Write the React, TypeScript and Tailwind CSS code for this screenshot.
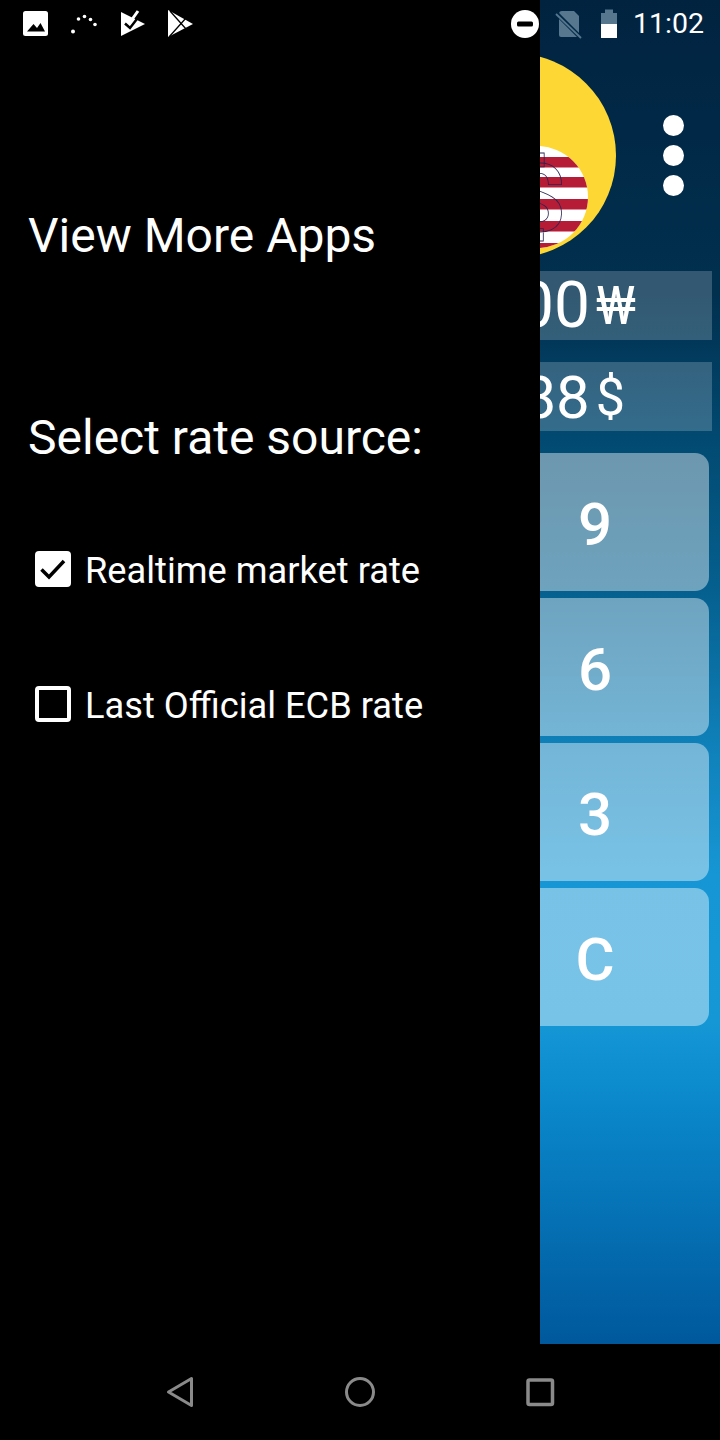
import React from "react";

const roboto = "font-['Roboto',sans-serif]";

function StatusBar() {
  return (
    <div className="absolute top-0 left-0 w-[720px] h-[48px] flex items-center justify-between">
      <svg width="200" height="48" viewBox="0 0 200 48" className="block">
        <rect x="23" y="11" width="25" height="25" rx="2.500" fill="#fff" />
        <path d="M27 31.500 L33.500 24 L37 28 L40.500 23 L45 31.500 Z" fill="#000" />
        <g fill="#fff">
          <circle cx="73" cy="31.500" r="2" />
          <circle cx="78.500" cy="19" r="1.800" />
          <circle cx="84.500" cy="16.500" r="1.800" />
          <circle cx="90.500" cy="19.500" r="1.800" />
          <circle cx="95" cy="24.500" r="1.800" />
        </g>
        <path d="M121 12 L145 24 L121 36 Z" fill="#fff" />
        <path d="M125 23.500 L130 28 L140 15" fill="none" stroke="#000" strokeWidth="2.500" />
        <path d="M128.500 19.500 L130.500 21.500 L138 11" fill="none" stroke="#fff" strokeWidth="3" />
        <path d="M168 10 L193 24 L168 37 Z" fill="#fff" />
        <path d="M169 37 L186 18 M170 11 L186 29" stroke="#000" strokeWidth="1.300" fill="none" />
      </svg>
      <div className="flex items-center h-[48px]">
        <svg width="123" height="48" viewBox="510 0 123 48" className="block">
          <circle cx="525" cy="24" r="14" fill="#fff" />
          <rect x="517" y="21.500" width="16" height="5" rx="1.500" fill="#000" />
          <path d="M562 11 H574 L579 16 V35 A2 2 0 0 1 577 37 H561 A2 2 0 0 1 559 35 V14 A3 3 0 0 1 562 11 Z" fill="#56778e" />
          <path d="M556 13 L582 39" stroke="#012844" strokeWidth="4.500" />
          <path d="M556 14 L581 38" stroke="#56778e" strokeWidth="1.800" />
          <path d="M605 13 V9.500 H613 V13 H617 V38 H601 V13 Z" fill="#56778e" />
          <rect x="601" y="24" width="16" height="14" fill="#fff" />
        </svg>
        <span className={`${roboto} text-white text-[28.500px] leading-[48px] mr-[16px] w-[71px] whitespace-nowrap`}>11:02</span>
      </div>
    </div>
  );
}

function Drawer() {
  return (
    <div className={`w-[540px] h-full bg-black text-white ${roboto} shrink-0`}>
      <div className="pl-[28px] pt-[206px] text-[48px] leading-[60px]">View More Apps</div>
      <div className="pl-[28px] pt-[142px] text-[48px] leading-[60px]">Select rate source:</div>
      <div className="pl-[35px] pt-[83px] flex items-center gap-[14px] h-[119px] text-[36.250px]">
        <div className="w-[36px] h-[36px] bg-white rounded-[4px] flex items-center justify-center">
          <svg width="28" height="24" viewBox="0 0 28 24">
            <path d="M2.500 12.500 L10 20 L25 4" fill="none" stroke="#000" strokeWidth="3.500" />
          </svg>
        </div>
        <span className="pt-[4px]">Realtime market rate</span>
      </div>
      <div className="pl-[35px] pt-[99px] flex items-center gap-[14px] h-[135px] text-[36.250px]">
        <div className="w-[36px] h-[36px] border-[4px] border-white rounded-[4px]" />
        <span className="pt-[4px]">Last Official ECB rate</span>
      </div>
    </div>
  );
}

function Coin() {
  const stripes = [157, 177, 199, 221, 243];
  return (
    <svg width="80" height="210" viewBox="540 50 80 210" className="block shrink-0 mt-[50px]">
      <defs>
        <clipPath id="flag">
          <circle cx="537" cy="197" r="51" />
        </clipPath>
      </defs>
      <circle cx="514" cy="155.500" r="102" fill="#fdd835" />
      <g clipPath="url(#flag)">
        <rect x="480" y="140" width="120" height="120" fill="#fff" />
        {stripes.map((y) => (
          <rect key={y} x="480" y={y} width="120" height="10.500" fill="#b71c36" />
        ))}
      </g>
      <text
        x="539"
        y="231"
        textAnchor="middle"
        fontFamily="Roboto, sans-serif"
        fontWeight="700"
        fontSize="94"
        fill="none"
        stroke="#2b2350"
        strokeWidth="0.800"
      >
        $
      </text>
    </svg>
  );
}

function Amount({
  digits,
  unit,
  digitSize,
  unitSize,
  right,
  mt,
}: {
  digits: string;
  unit: string;
  digitSize: string;
  unitSize: string;
  right: string;
  mt: string;
}) {
  return (
    <div className={`${mt} h-[69px] w-[172px] bg-white/20 flex items-center justify-end overflow-hidden shrink-0`}>
      <div className={`${roboto} ${right} text-white flex items-center gap-[6px] whitespace-nowrap`}>
        <span className={`${digitSize} leading-[69px]`}>{digits}</span>
        <span className={`${unitSize} leading-[69px]`}>{unit}</span>
      </div>
    </div>
  );
}

function Key({ label }: { label: string }) {
  return (
    <div className="w-[228px] h-[138px] shrink-0 rounded-[14px] bg-white/42 flex items-center justify-center pt-[6px]">
      <span className={`${roboto} text-white font-medium text-[60px]`}>{label}</span>
    </div>
  );
}

function Panel() {
  return (
    <div className="w-[180px] h-full overflow-hidden flex flex-col bg-[linear-gradient(180deg,#012340_0%,#01304f_22%,#024a72_33%,#05608f_44%,#0f7fb8_55%,#1696d4_65%,#1597d6_76%,#0a88cb_82%,#00589c_100%)]">
      <div className="h-[271px] flex justify-between shrink-0">
        <Coin />
        <div className="flex flex-col gap-[9px] mt-[115px] mr-[36px]">
          <div className="w-[21px] h-[21px] rounded-full bg-white" />
          <div className="w-[21px] h-[21px] rounded-full bg-white" />
          <div className="w-[21px] h-[21px] rounded-full bg-white" />
        </div>
      </div>
      <Amount digits="000" unit="₩" digitSize="text-[64px]" unitSize="text-[54px]" right="mr-[76px]" mt="mt-0" />
      <Amount digits="888" unit="$" digitSize="text-[60px]" unitSize="text-[52px]" right="mr-[87px] pt-[2px]" mt="mt-[22px]" />
      <div className="mt-[22px] pr-[11px] flex flex-col items-end gap-[7px]">
        <Key label="9" />
        <Key label="6" />
        <Key label="3" />
        <Key label="C" />
      </div>
    </div>
  );
}

function NavBar() {
  return (
    <div className="h-[96px] bg-black">
      <svg width="720" height="96" viewBox="0 1344 720 96" className="block">
        <path d="M168.500 1392 L191.500 1378.500 V1405.500 Z" fill="none" stroke="#8a8a8a" strokeWidth="3" strokeLinejoin="round" />
        <circle cx="360" cy="1392" r="13.500" fill="none" stroke="#8a8a8a" strokeWidth="3" />
        <rect x="528" y="1380" width="24.500" height="24.500" rx="1.500" fill="none" stroke="#8a8a8a" strokeWidth="3.500" />
      </svg>
    </div>
  );
}

export default function App() {
  return (
    <div className="relative w-[720px] h-[1440px] bg-black overflow-hidden">
      <div className="flex h-[1344px]">
        <Drawer />
        <Panel />
      </div>
      <NavBar />
      <StatusBar />
    </div>
  );
}
